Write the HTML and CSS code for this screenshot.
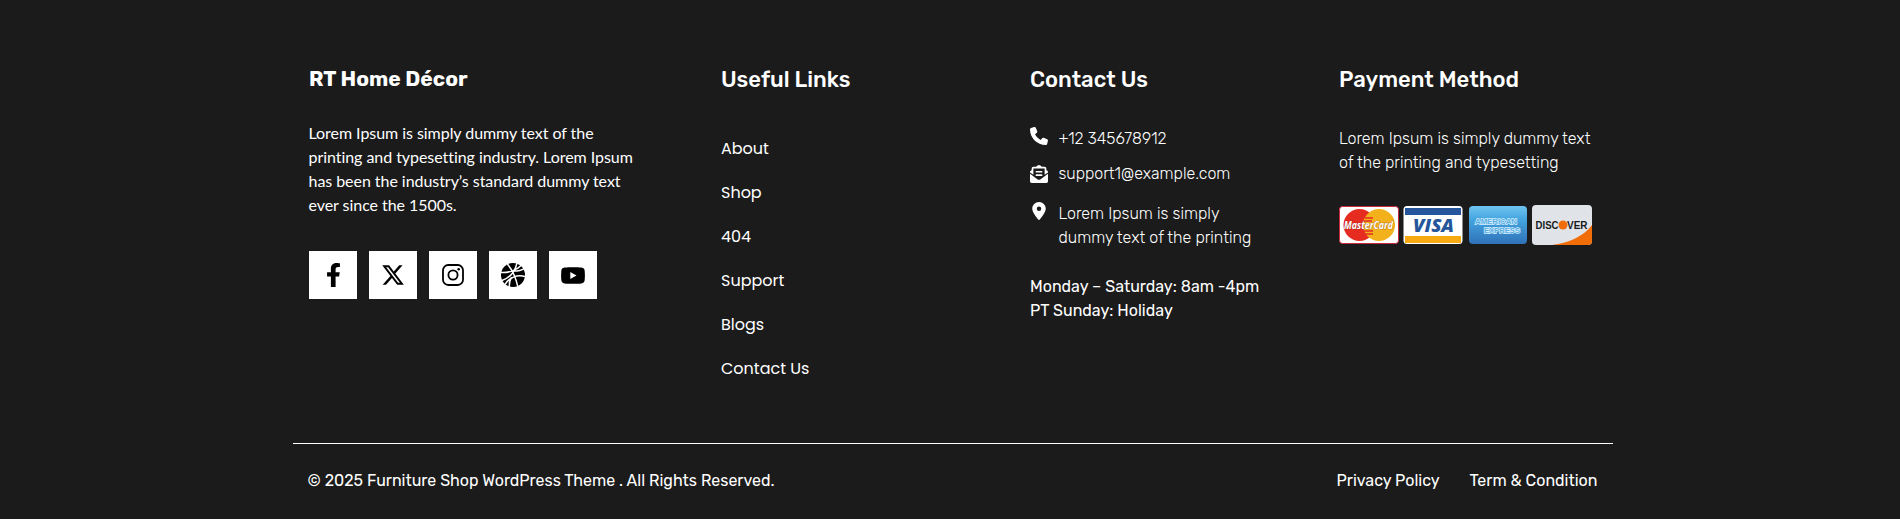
FILE: index.html
```html
<!DOCTYPE html>
<html lang="en">
<head>
    <meta charset="UTF-8">
    <meta name="viewport" content="width=device-width, initial-scale=1.0">
    <title>RT Home Décor</title>
    <link rel="stylesheet" href="styles.css">
</head>
<body>
    <footer class="footer">
        <div class="footer-columns">
            <div class="col about">
                <div class="logo">RT Home Décor</div>
                <p>Lorem Ipsum is simply dummy text of the<br>printing and typesetting industry. Lorem Ipsum<br>has been the industry’s standard dummy text<br>ever since the 1500s.</p>
                <div class="social">
                    <a href="#" aria-label="Facebook">
                        <svg width="15" height="24" viewBox="0 0 320 512"><path d="M279.14 288l14.22-92.66h-88.91v-60.13c0-25.35 12.42-50.06 52.24-50.06h40.42V6.26S260.43 0 225.36 0c-73.22 0-121.08 44.38-121.08 124.72v70.62H22.89V288h81.39v224h100.17V288z"/></svg>
                    </a>
                    <a href="#" aria-label="X">
                        <svg width="24" height="24" viewBox="0 0 512 512"><path d="M389.2 48h70.6L305.6 224.2 487 464H345L233.7 318.6 106.5 464H35.8L200.7 275.5 26.8 48H172.4L272.9 180.9 389.2 48zM364.4 421.8h39.1L151.1 88h-42L364.4 421.8z"/></svg>
                    </a>
                    <a href="#" aria-label="Instagram">
                        <svg width="22" height="22" viewBox="0 0 22 22" fill="none" stroke="#000" stroke-width="1.8"><rect x="1" y="1" width="20" height="20" rx="5.2"/><circle cx="11" cy="11" r="4.6"/><circle cx="16.7" cy="5.3" r="1.3" fill="#000" stroke="none"/></svg>
                    </a>
                    <a href="#" aria-label="Dribbble">
                        <svg width="24" height="24" viewBox="0 0 24 24"><circle cx="12" cy="12" r="12"/><path d="M0 9.500C8 10 16 7 20 2.500M6 .5c5 6 9 14 11 24M4 21.500C8 14.500 16 11.500 24 13.500M1 17.500C8 15 14 9 16 0M13 8c5 0 8-1 11-3M10.500 14.500c-2 3-2.500 6-2 10" fill="none" stroke="#fff" stroke-width="1.5"/></svg>
                    </a>
                    <a href="#" aria-label="YouTube">
                        <svg width="24" height="17" viewBox="0 0 24 17"><path d="M3.500 .6C8 0 16 0 20.500 .6 22.600 1 23.500 2 23.700 4c.3 3 .3 6 0 9-.2 2-1.100 3-3.200 3.400-4.500.6-12.500.6-17 0C1.400 16 .5 15 .3 13c-.3-3-.3-6 0-9C.5 2 1.400 1 3.500.6z"/><path d="M9.300 4.900v7.200l6.200-3.600z" fill="#fff"/></svg>
                    </a>
                </div>
            </div>

            <div class="col">
                <h2>Useful Links</h2>
                <ul class="links">
                    <li><a href="#">About</a></li>
                    <li><a href="#">Shop</a></li>
                    <li><a href="#">404</a></li>
                    <li><a href="#">Support</a></li>
                    <li><a href="#">Blogs</a></li>
                    <li><a href="#">Contact Us</a></li>
                </ul>
            </div>

            <div class="col">
                <h2>Contact Us</h2>
                <ul class="contact">
                    <li>
                        <svg width="18" height="18" viewBox="0 0 512 512"><path d="M164.900 24.600c-7.700-18.600-28-28.500-47.400-23.200l-88 24C12.100 30.200 0 46 0 64c0 247.400 200.600 448 448 448 18 0 33.800-12.100 38.600-29.500l24-88c5.300-19.400-4.600-39.700-23.200-47.400l-96-40c-16.300-6.800-35.200-2.100-46.300 11.600L304.700 368C234.300 334.700 177.300 277.700 144 207.300l49.300-40.300c13.700-11.200 18.400-30 11.600-46.300l-40-96z"/></svg>
                        <span>+12 345678912</span>
                    </li>
                    <li class="email">
                        <svg width="18" height="18" viewBox="0 0 512 512"><path d="M176 216h160c8.840 0 16-7.160 16-16v-16c0-8.840-7.160-16-16-16H176c-8.840 0-16 7.160-16 16v16c0 8.840 7.160 16 16 16zm-16 80c0 8.840 7.160 16 16 16h160c8.840 0 16-7.160 16-16v-16c0-8.840-7.160-16-16-16H176c-8.840 0-16 7.160-16 16v16zm96 121.130c-16.420 0-32.840-5.060-46.860-15.190L0 250.860V464c0 26.510 21.490 48 48 48h416c26.510 0 48-21.490 48-48V250.860L302.860 401.940c-14.020 10.120-30.440 15.190-46.860 15.190zm237.610-254.180c-8.850-6.940-17.240-13.470-29.610-22.810V96c0-26.510-21.490-48-48-48h-77.550c-3.040-2.200-5.870-4.260-9.040-6.560C312.600 29.170 279.200-.35 256 0c-23.200-.35-56.590 29.170-73.410 41.440-3.170 2.300-6 4.360-9.040 6.560H96c-26.510 0-48 21.490-48 48v44.140c-12.370 9.330-20.760 15.870-29.610 22.810A47.995 47.995 0 0 0 0 200.720v10.650l96 69.350V96h320v184.720l96-69.350v-10.650c0-14.740-6.780-28.670-18.390-37.770z"/></svg>
                        <span>support1@example.com</span>
                    </li>
                    <li class="address">
                        <svg width="18" height="18" viewBox="-64 0 512 512"><path d="M215.700 499.200C267 435 384 279.400 384 192 384 86 298 0 192 0S0 86 0 192c0 87.400 117 243 168.300 307.200 12.300 15.300 35.100 15.300 47.400 0zM192 128a64 64 0 1 1 0 128 64 64 0 1 1 0-128z"/></svg>
                        <span>Lorem Ipsum is simply<br>dummy text of the printing</span>
                    </li>
                </ul>
                <p class="hours">Monday – Saturday: 8am -4pm<br>PT Sunday: Holiday</p>
            </div>

            <div class="col">
                <h2>Payment Method</h2>
                <p class="payment-text">Lorem Ipsum is simply dummy text<br>of the printing and typesetting</p>
                <svg class="cards" width="254" height="40" viewBox="0 0 254 40">
                    <defs>
                        <linearGradient id="amex" x1="0" y1="0" x2="0" y2="1">
                            <stop offset="0" stop-color="#6fc4f0"/>
                            <stop offset=".35" stop-color="#45a5e0"/>
                            <stop offset="1" stop-color="#2f72b8"/>
                        </linearGradient>
                        <clipPath id="discover"><rect x="193" y="0" width="60" height="40" rx="4"/></clipPath>
                    </defs>
                    <!-- MasterCard -->
                    <rect x=".5" y="1.500" width="59" height="37" rx="3" fill="#fff" stroke="#c8283c"/>
                    <circle cx="20.500" cy="20" r="16" fill="#e62b21"/>
                    <circle cx="40" cy="20" r="16" fill="#f3b11b"/>
                    <path d="M26 13h8M25 16h8M25 26h9M26 29h8" stroke="#e62b21" stroke-width="1.300"/>
                    <text x="5" y="24" class="mc" textLength="49" lengthAdjust="spacingAndGlyphs">MasterCard</text>
                    <!-- Visa -->
                    <rect x="64.500" y="1" width="59" height="38" rx="3.500" fill="#fff"/>
                    <path d="M66 3h56v7H66z" fill="#25569b"/>
                    <path d="M66 31h56v7H66z" fill="#f6a912"/>
                    <text x="74" y="26.500" class="visa" textLength="41" lengthAdjust="spacingAndGlyphs">VISA</text>
                    <!-- American Express -->
                    <rect x="130" y="1" width="58" height="38" rx="4" fill="url(#amex)"/>
                    <text x="136" y="19" class="amex" textLength="42" lengthAdjust="spacingAndGlyphs">AMERICAN</text>
                    <text x="145" y="28" class="amex" textLength="36" lengthAdjust="spacingAndGlyphs">EXPRESS</text>
                    <!-- Discover -->
                    <g clip-path="url(#discover)">
                        <path d="M193 0h60v40h-60z" fill="#e0e4e9"/>
                        <path d="M213 40c16-2 31-8 40-20v20z" fill="#f06d08"/>
                    </g>
                    <circle cx="224" cy="20" r="4.500" fill="#f06d08"/>
                    <text x="196.500" y="24" class="disc" textLength="23" lengthAdjust="spacingAndGlyphs">DISC</text>
                    <text x="228" y="24" class="disc" textLength="20.500" lengthAdjust="spacingAndGlyphs">VER</text>
                </svg>
            </div>
        </div>

        <div class="footer-bottom">
            <p>© 2025 Furniture Shop WordPress Theme . All Rights Reserved.</p>
            <div class="legal">
                <a href="#">Privacy Policy</a>
                <a href="#">Term &amp; Condition</a>
            </div>
        </div>
    </footer>
</body>
</html>
```
FILE: styles.css
```css
body {
    margin: 0;
    background-color: #1b1b1b;
    color: #fff;
    font-family: Rubik, Roboto, sans-serif;
    font-size: 16px;
    line-height: 24px;
}
.footer {
    width: 1320px;
    margin-left: 293px;
}
.footer-columns {
    display: grid;
    grid-template-columns: 412px 309px 309px auto;
    height: 376px;
    padding: 67px 0 0 16px;
    box-sizing: content-box;
}
p, h2, ul {
    margin: 0;
    padding: 0;
}
ul {
    list-style: none;
}
a {
    color: #fff;
    text-decoration: none;
}
svg {
    display: block;
    flex-shrink: 0;
}
h2 {
    font-size: 22px;
    font-weight: 500;
    line-height: 26px;
}
.logo {
    font-size: 21px;
    font-weight: 700;
    line-height: 24px;
}
.about p {
    margin: 30px 0 0 -0.5px;
    font-family: Lato, sans-serif;
    letter-spacing: -0.05px;
}
.social {
    display: flex;
    gap: 12px;
    margin-top: 34px;
}
.social a {
    display: flex;
    align-items: center;
    justify-content: center;
    width: 48px;
    height: 48px;
    background-color: #fff;
}
.links {
    margin-top: 44px;
    font-family: Poppins, Inter, sans-serif;
}
.links li {
    margin-bottom: 20px;
}
.contact {
    margin-top: 34px;
    font-weight: 300;
}
.contact li {
    display: flex;
    gap: 10.5px;
}
.contact svg {
    fill: #fff;
}
.contact .email {
    margin-top: 11px;
}
.contact .email svg {
    margin-top: 3px;
}
.contact .address {
    margin-top: 16px;
}
.hours {
    margin-top: 25px;
}
.payment-text {
    margin-top: 34px;
    font-weight: 300;
}
.cards {
    margin-top: 30px;
}
.mc {
    font: italic 700 10px "Open Sans", sans-serif;
    fill: #fff;
    stroke: #7c3020;
    stroke-width: .5px;
    paint-order: stroke;
}
.visa {
    font: italic 800 18px "Open Sans", sans-serif;
    fill: #25569b;
}
.amex {
    font: 700 8px "Liberation Sans", sans-serif;
    fill: #58aee2;
    stroke: #d4efff;
    stroke-width: 1.4px;
    paint-order: stroke;
}
.disc {
    font: 700 11px "Liberation Sans", sans-serif;
    fill: #17191c;
}
.footer-bottom {
    display: flex;
    justify-content: space-between;
    padding: 25px 15.5px 0 14.5px;
    border-top: 1px solid #fff;
}
.legal {
    display: flex;
    gap: 30px;
}
```
